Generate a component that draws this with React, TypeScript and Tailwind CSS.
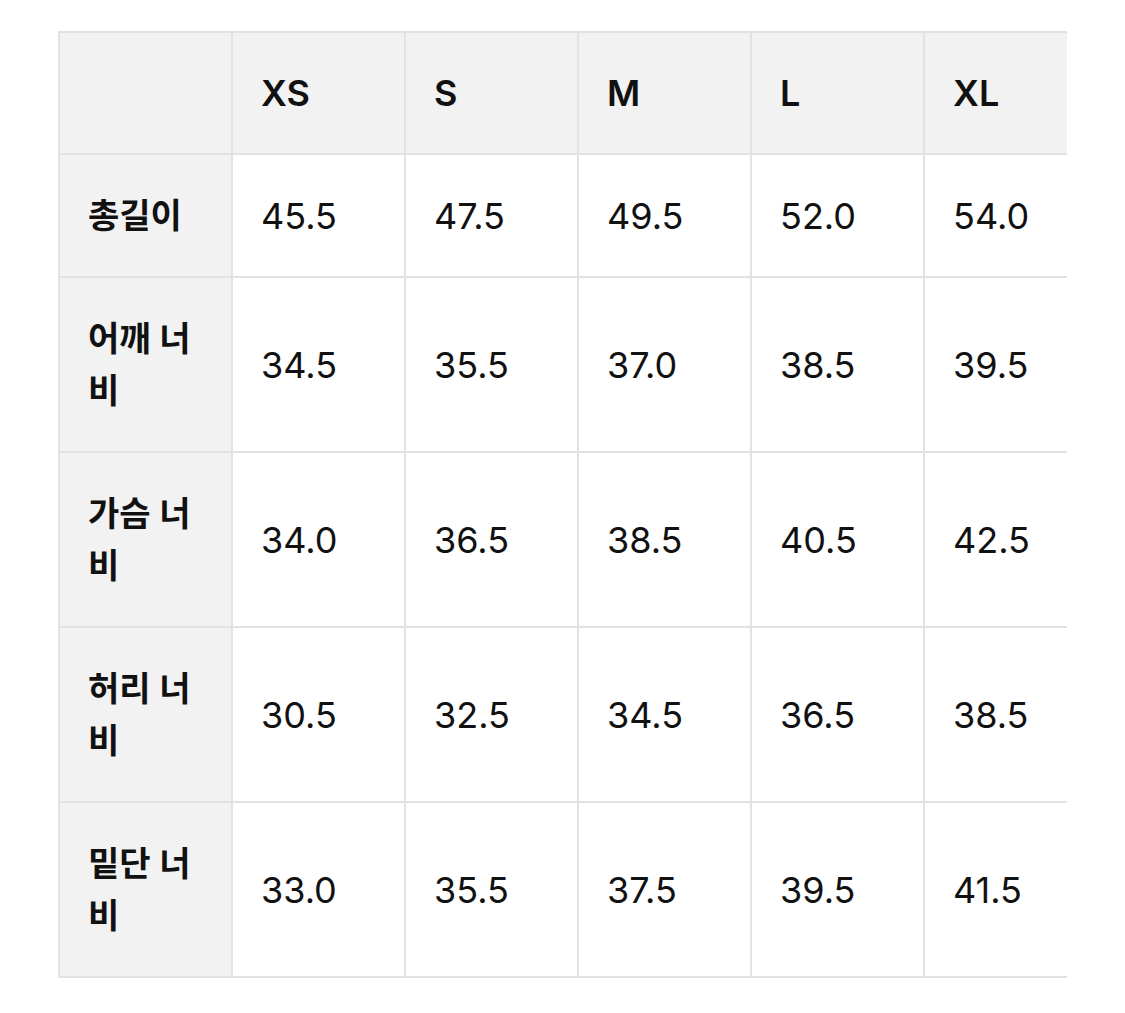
import React from 'react';

const sizes = ['XS', 'S', 'M', 'L', 'XL'];

const rows: { label: string; values: string[] }[] = [
  { label: '총길이', values: ['45.5', '47.5', '49.5', '52.0', '54.0'] },
  { label: '어깨 너비', values: ['34.5', '35.5', '37.0', '38.5', '39.5'] },
  { label: '가슴 너비', values: ['34.0', '36.5', '38.5', '40.5', '42.5'] },
  { label: '허리 너비', values: ['30.5', '32.5', '34.5', '36.5', '38.5'] },
  { label: '밑단 너비', values: ['33.0', '35.5', '37.5', '39.5', '41.5'] },
];

const cell = 'border-2 border-[#e2e2e2] px-[28px] align-middle text-left';

const App: React.FC = () => {
  return (
    <div className="min-h-screen bg-white px-[58px] pt-[31px] font-['Inter','Noto_Sans_CJK_KR',sans-serif] text-[36px] leading-[52px] text-[#111]">
      {/* size table, cut off at the right like a scroll box */}
      <div className="overflow-hidden">
        <table className="w-[1038px] table-fixed border-collapse">
          <thead>
            <tr className="bg-[#f2f2f2]">
              <th className={`${cell} w-[173px] py-[34px] font-semibold`}></th>
              {sizes.map((s) => (
                <th key={s} className={`${cell} w-[173px] py-[34px] font-semibold`}>
                  {s}
                </th>
              ))}
            </tr>
          </thead>
          <tbody>
            {rows.map((r) => (
              <tr key={r.label}>
                <th className={`${cell} bg-[#f2f2f2] py-[34.5px] text-[34px] font-semibold`}>{r.label}</th>
                {r.values.map((v, i) => (
                  <td key={i} className={`${cell} py-[34.5px] font-normal`}>
                    {v}
                  </td>
                ))}
              </tr>
            ))}
          </tbody>
        </table>
      </div>
    </div>
  );
};

export default App;
